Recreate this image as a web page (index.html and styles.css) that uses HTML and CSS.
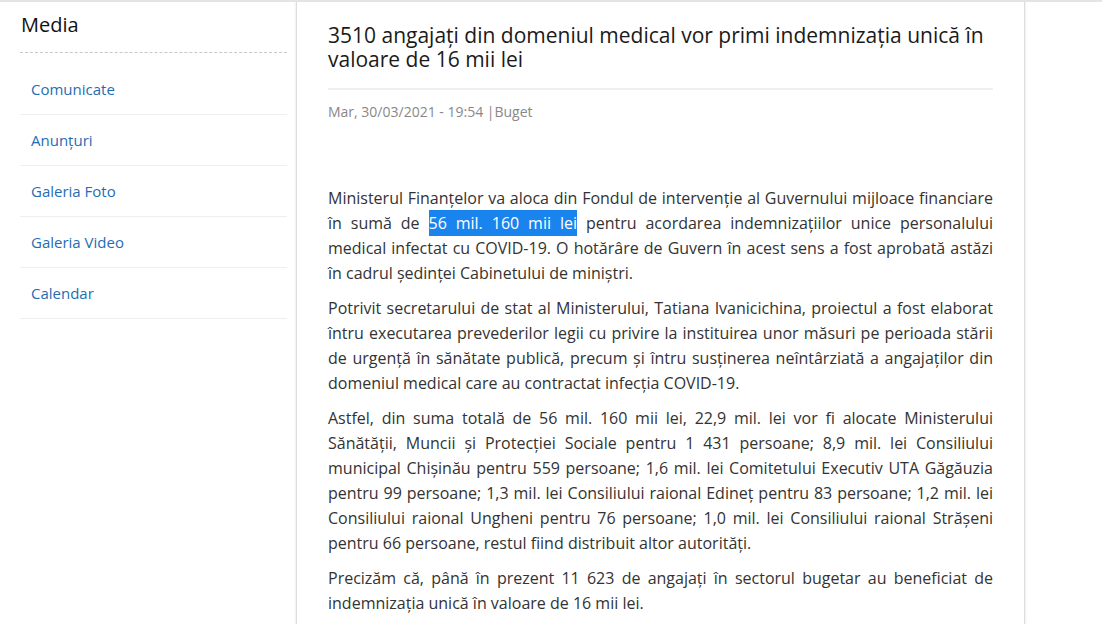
FILE: index.html
```html
<!DOCTYPE html>
<html lang="ro">

<head>
  <meta charset="UTF-8" />
  <meta name="viewport" content="width=device-width, initial-scale=1.0">
  <title>Media - Comunicate</title>
  <link rel="stylesheet" href="styles.css">
</head>

<body>
  <div class="page">
    <aside class="sidebar">
      <h2 class="sidebar-title">Media</h2>
      <ul class="side-menu">
        <li><a href="#">Comunicate</a></li>
        <li><a href="#">Anunţuri</a></li>
        <li><a href="#">Galeria Foto</a></li>
        <li><a href="#">Galeria Video</a></li>
        <li><a href="#">Calendar</a></li>
      </ul>
    </aside>

    <main class="article">
      <h1 class="article-title">3510 angajaţi din domeniul medical vor primi indemnizaţia unică în valoare de 16 mii lei</h1>
      <div class="article-meta">Mar, 30/03/2021 - 19:54 |Buget</div>

      <div class="article-body">
        <p>Ministerul Finanţelor va aloca din Fondul de intervenţie al Guvernului mijloace financiare în sumă de <span class="selected">56 mil. 160 mii lei</span> pentru acordarea indemnizaţiilor unice personalului medical infectat cu COVID-19. O hotărâre de Guvern în acest sens a fost aprobată astăzi în cadrul şedinţei Cabinetului de miniştri.</p>
        <p>Potrivit secretarului de stat al Ministerului, Tatiana Ivanicichina, proiectul a fost elaborat întru executarea prevederilor legii cu privire la instituirea unor măsuri pe perioada stării de urgenţă în sănătate publică, precum şi întru susţinerea neîntârziată a angajaţilor din domeniul medical care au contractat infecţia COVID-19.</p>
        <p>Astfel, din suma totală de 56 mil. 160 mii lei, 22,9 mil. lei vor fi alocate Ministerului Sănătăţii, Muncii şi Protecţiei Sociale pentru 1 431 persoane; 8,9 mil. lei Consiliului municipal Chişinău pentru 559 persoane; 1,6 mil. lei Comitetului Executiv UTA Găgăuzia pentru 99 persoane; 1,3 mil. lei Consiliului raional Edineţ pentru 83 persoane; 1,2 mil. lei Consiliului raional Ungheni pentru 76 persoane; 1,0 mil. lei Consiliului raional Străşeni pentru 66 persoane, restul fiind distribuit altor autorităţi.</p>
        <p>Precizăm că, până în prezent 11 623 de angajaţi în sectorul bugetar au beneficiat de indemnizaţia unică în valoare de 16 mii lei.</p>
      </div>
    </main>
  </div>
</body>

</html>
```

FILE: styles.css
```css
body {
  margin: 0;
  padding: 0;
  font-family: 'Open Sans', 'Noto Sans', sans-serif;
  background-color: #fff;
  color: #333;
}

.page {
  display: flex;
  align-items: flex-start;
  border-top: 2px solid #e4e4e4;
  height: 622px;
  overflow: hidden;
}

/* left column */
.sidebar {
  width: 267px;
  margin-left: 20px;
  margin-right: 9px;
}

.sidebar-title {
  margin: 0;
  padding: 11px 0 0 1px;
  font-size: 20px;
  font-weight: normal;
  line-height: 24px;
  color: #111;
  height: 39px;
  border-bottom: 1px dashed #c8c8c8;
}

.side-menu {
  list-style: none;
  margin: 11px 0 0;
  padding: 0;
}

.side-menu li {
  border-bottom: 1px solid #eee;
}

.side-menu a {
  display: block;
  padding: 0 11px;
  height: 50px;
  line-height: 50px;
  font-size: 15px;
  color: #1f6db3;
  text-decoration: none;
}

/* article */
.article {
  width: 665px;
  padding: 21px 31px 40px 31px;
  align-self: stretch;
  border-left: 1px solid #ddd;
  border-right: 1px solid #ddd;
  box-shadow: -1px 0 2px rgba(0, 0, 0, 0.06), 1px 0 2px rgba(0, 0, 0, 0.06);
}

.article-title {
  margin: 0;
  padding-bottom: 17px;
  font-size: 21px;
  font-weight: normal;
  line-height: 24px;
  color: #1a1a1a;
  border-bottom: 2px solid #efefef;
}

.article-meta {
  margin-top: 12px;
  font-size: 14px;
  line-height: 20px;
  color: #888;
}

.article-body {
  margin-top: 64px;
}

.article-body p {
  margin: 0 0 10px;
  font-size: 16px;
  line-height: 25px;
  text-align: justify;
  color: #333;
}

.selected {
  background-color: #1a84ee;
  color: #fff;
  padding: 2px 0;
}
```
